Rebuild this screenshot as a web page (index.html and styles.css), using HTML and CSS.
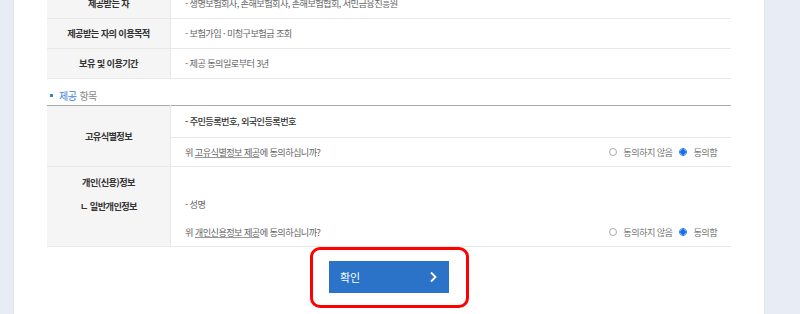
FILE: index.html
```
<!DOCTYPE html>
<html lang="ko">
<head>
    <meta charset="UTF-8">
    <meta name="viewport" content="width=device-width, initial-scale=1.0">
    <title>제3자 정보제공 동의</title>
    <link rel="stylesheet" href="styles.css">
</head>
<body>
    <div class="card">
        <table class="info-table top">
            <tr>
                <th>제공받는 자</th>
                <td>- 생명보험회사, 손해보험회사, 손해보험협회, 서민금융진흥원</td>
            </tr>
            <tr>
                <th>제공받는 자의 이용목적</th>
                <td>- 보험가입 · 미청구보험금 조회</td>
            </tr>
            <tr>
                <th>보유 및 이용기간</th>
                <td>- 제공 동의일로부터 3년</td>
            </tr>
        </table>

        <h3 class="section-title"><span class="bullet"></span><em>제공</em> 항목</h3>

        <table class="info-table items">
            <tr>
                <th rowspan="2">고유식별정보</th>
                <td class="item-name">- 주민등록번호, 외국인등록번호</td>
            </tr>
            <tr>
                <td class="agree-row">
                    <span class="question">위 <u>고유식별정보 제공</u>에 동의하십니까?</span>
                    <span class="choices">
                        <span class="radio"></span>동의하지 않음
                        <span class="radio checked"></span>동의함
                    </span>
                </td>
            </tr>
            <tr>
                <th class="multi">
                    <div>개인(신용)정보</div>
                    <div>ㄴ 일반개인정보</div>
                </th>
                <td class="stack">
                    <div class="plain">- 성명</div>
                    <div class="agree-row">
                        <span class="question">위 <u>개인신용정보 제공</u>에 동의하십니까?</span>
                        <span class="choices">
                            <span class="radio"></span>동의하지 않음
                            <span class="radio checked"></span>동의함
                        </span>
                    </div>
                </td>
            </tr>
        </table>

        <div class="actions">
            <div class="highlight">
                <button class="btn-confirm">
                    <span>확인</span>
                    <svg width="8" height="12" viewBox="0 0 8 12"><path d="M2 1.5 L6.5 6 L2 10.5" fill="none" stroke="#fff" stroke-width="1.8"/></svg>
                </button>
            </div>
        </div>
    </div>
</body>
</html>
```

FILE: styles.css
```
body {
    margin: 0;
    background-color: #e8edf5;
    font-family: "Noto Sans CJK KR", "Noto Sans", sans-serif;
    color: #666;
    overflow: hidden;
    height: 314px;
}
.card {
    margin-left: 13px;
    width: 752px;
    height: 330px;
    margin-top: -12px;
    background: #fff;
    border-left: 1px solid #dfe4ee;
    border-right: 1px solid #dfe4ee;
    padding: 0 33px;
    box-sizing: border-box;
}
.info-table {
    width: 100%;
    border-collapse: collapse;
    font-size: 9.2px;
    letter-spacing: -0.6px;
}
.info-table th {
    width: 123px;
    background: #f5f5f5;
    color: #333;
    font-weight: bold;
    text-align: center;
    border-right: 1px solid #e8e8e8;
    border-bottom: 1px solid #e8e8e8;
    padding: 0;
}
.info-table td {
    padding: 0 14px;
    border-bottom: 1px solid #e8e8e8;
    vertical-align: middle;
}
.info-table.top tr {
    height: 30px;
}
.section-title {
    margin: 0;
    height: 19px;
    padding-top: 7px;
    display: flex;
    align-items: center;
    padding-left: 3px;
    font-size: 10px;
    font-weight: normal;
    color: #888;
    letter-spacing: -0.5px;
}
.section-title em {
    font-style: normal;
    color: #3b7fd4;
    margin-right: 3px;
}
.bullet {
    width: 3px;
    height: 3px;
    background: #3b7fd4;
    margin-right: 6px;
}
.info-table.items {
    border-top: 1px solid #aaa;
}
.item-name {
    height: 31px;
    color: #333;
    font-weight: 500;
}
.agree-row {
    height: 28px;
}
div.agree-row {
    display: flex;
    align-items: center;
    justify-content: space-between;
    padding: 0 14px;
}
.info-table td.agree-row .choices {
    float: right;
}
.question u {
    text-decoration-color: #999;
}
.choices {
    display: inline-flex;
    align-items: center;
    color: #777;
}
.radio {
    width: 8px;
    height: 8px;
    border: 1px solid #aaa;
    border-radius: 50%;
    box-sizing: border-box;
    margin-right: 6px;
    background: #fff;
}
.radio.checked {
    border-color: #2f80ed;
    margin-left: 7px;
    background: radial-gradient(circle, #1a6fe8 0 2.5px, #fff 3px);
}
.info-table th.multi {
    height: 79px;
    vertical-align: top;
}
.multi div {
    line-height: 24px;
}
.multi div:first-child {
    margin-top: 3px;
}
.info-table td.stack {
    padding: 0;
    vertical-align: bottom;
}
.plain {
    padding: 0 14px;
    height: 24px;
    line-height: 24px;
    margin-bottom: 2px;
}
.actions {
    display: flex;
    justify-content: center;
}
.highlight {
    margin-top: 0;
    width: 159px;
    height: 61px;
    border: 3px solid #ff0000;
    border-radius: 10px;
    box-sizing: border-box;
    display: flex;
    align-items: center;
    justify-content: center;
}
.btn-confirm {
    width: 120px;
    height: 32px;
    background: #2a73c9;
    border: 0;
    color: #fff;
    font-family: "Noto Sans CJK KR", sans-serif;
    font-size: 11px;
    display: flex;
    align-items: center;
    justify-content: space-between;
    padding: 0 12px 0 11px;
}
```
